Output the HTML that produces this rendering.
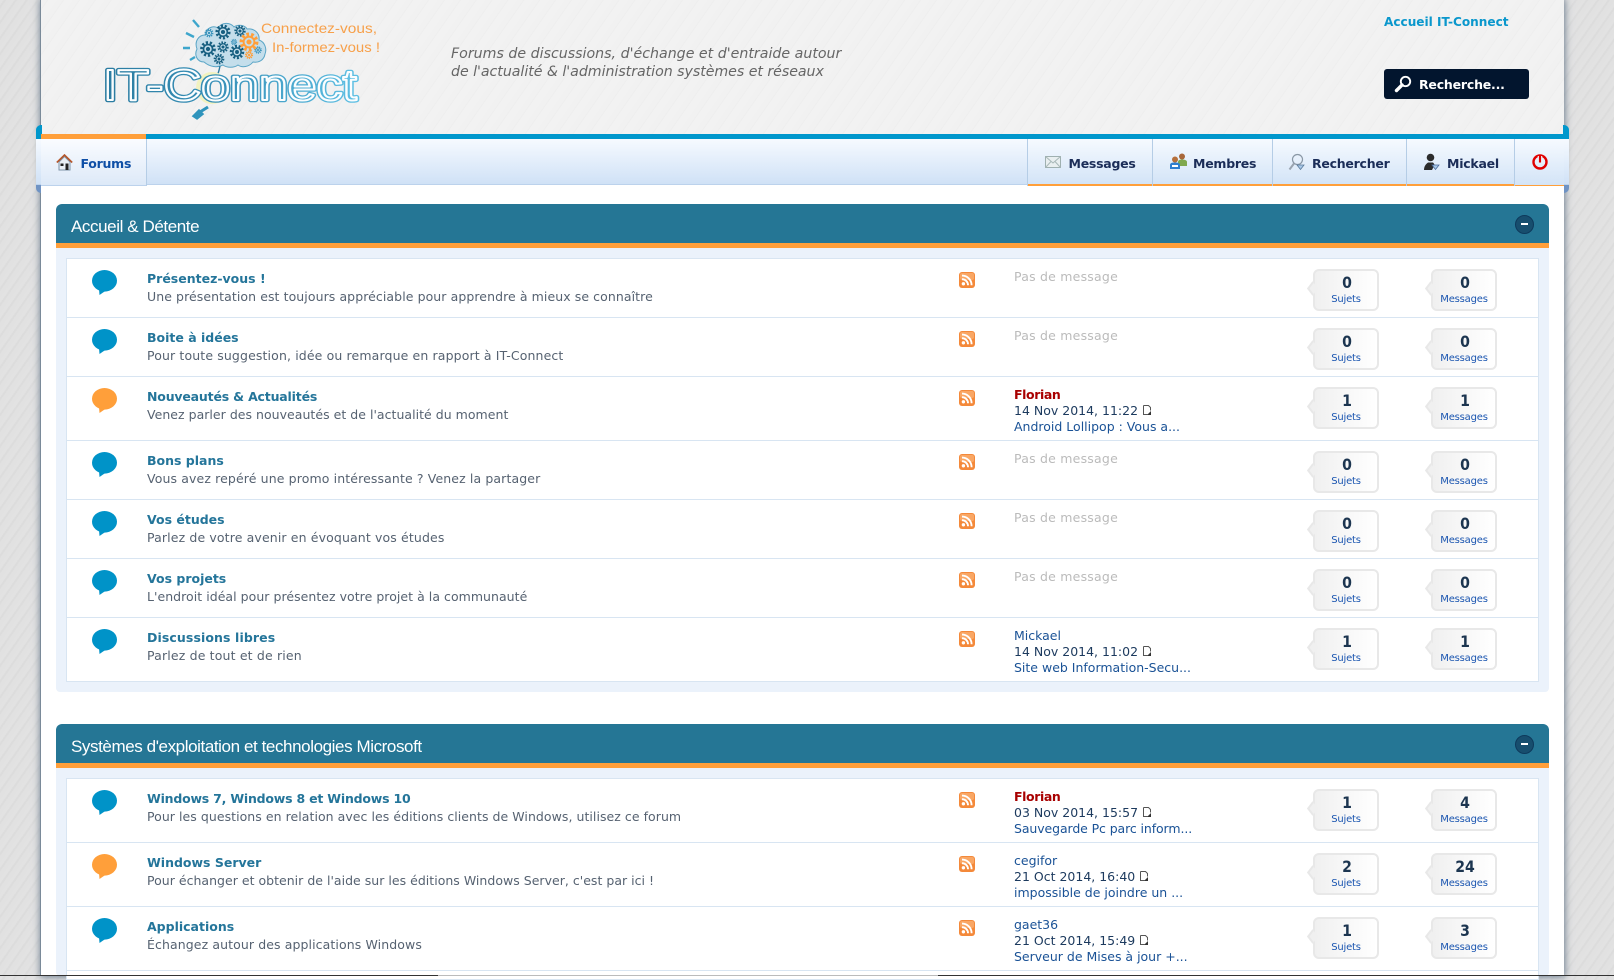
<!DOCTYPE html>
<html lang="fr"><head><meta charset="utf-8"><title>IT-Connect Forums</title>
<style>
html,body{margin:0;padding:0}
body{width:1614px;height:976px;overflow:hidden;position:relative;font-family:"DejaVu Sans","Liberation Sans",sans-serif;font-size:13px;
background:#e0e0e0 repeating-linear-gradient(125deg,#e2e2e2 0,#e2e2e2 3px,#dcdcdc 3px,#dcdcdc 5px,#e1e1e1 5px,#e1e1e1 9px)}
div,span,svg{position:absolute}
#wrap{left:41px;top:0;width:1523px;height:976px;background:#fff;box-shadow:-1px 0 0 #7a8a99,0 0 7px 1px #6d7d8f}
#hd{left:41px;top:0;width:1523px;height:134px;background:#f0f0f0 repeating-linear-gradient(125deg,#f1f1f1 0,#f1f1f1 5px,#eeeeee 5px,#eeeeee 6px,#f2f2f2 6px,#f2f2f2 13px)}
.tag{left:451px;font-style:italic;font-size:14.2px;color:#666;white-space:nowrap;line-height:18px}
#home{left:1384px;top:13px;font-weight:bold;font-size:12.1px;color:#0a97cc;line-height:18px;white-space:nowrap}
#srch{left:1384px;top:69px;width:145px;height:30px;background:#02152e;border-radius:3px}
#srch span{left:35px;top:5.500px;color:#fff;font-weight:bold;font-size:12.5px;letter-spacing:-.2px;line-height:20px;white-space:nowrap}
.bmp{width:6px;height:14px;top:125px;background:#0097cc}
#bar{left:36px;top:134px;width:1533px;height:5px;background:#0097cc}
#nav{left:36px;top:139px;width:1533px;height:46px;background:linear-gradient(#f6faff,#cfe1f6);box-shadow:inset 0 -1px 0 #bcd2ec}
.tab{top:139px;height:45px;background:linear-gradient(#f6faff,#d3e4f7);border-bottom:2px solid #ff9f3a;box-shadow:-1px 0 0 #b5cde6}
.tab span{top:14.500px;font-weight:bold;font-size:12.5px;letter-spacing:-.25px;line-height:20px;color:#1b2d58;white-space:nowrap}
.cat{left:56px;width:1493px;height:39px;background:#257695;border-radius:6px 6px 0 0;border-bottom:5px solid #ff9f3a}
.cat span{left:15px;top:12px;font-family:"Liberation Sans",sans-serif;font-size:17px;line-height:22px;color:#fff;letter-spacing:-.41px;white-space:nowrap}
.tog{left:1459px;top:11px;width:17px;height:17px;border-radius:50%;background:#174e6e;border:1px solid #0e3a5c}
.tog:after{content:"";position:absolute;left:5px;top:7px;width:7px;height:2px;background:#fff}
.bdy{left:56px;width:1493px;background:#ebf2fb;border-radius:0 0 4px 4px}
.pan{left:66px;width:1471px;background:#fff;border:1px solid #d8e5f2}
.r{left:66px;width:1473px;border-bottom:1px solid #d8e5f2;box-sizing:border-box}
.r>svg.b{left:26px;top:12px}
.r>svg.f{left:893px;top:14px}
.t{left:81px;top:11.500px;font-weight:bold;font-size:12.5px;line-height:18px;color:#24759a;white-space:nowrap}
.d{left:81px;top:30px;font-size:12.5px;letter-spacing:.08px;line-height:18px;color:#566271;white-space:nowrap}
.n{left:948px;top:11px;line-height:16px;font-size:12.5px;color:#1c3a5e;white-space:nowrap}
.n b{color:#a80000;letter-spacing:-.4px}
.n a{color:#1a5296;text-decoration:none}
.n i{font-style:normal;color:#bbb;letter-spacing:.22px}
.bx{top:11px;width:62px;height:38px;border:2px solid #e8e8e8;border-radius:6px;background:linear-gradient(90deg,#f0f0f0,#fff);text-align:center;margin-left:-1px}
.bx:before{content:"";position:absolute;left:-7px;top:13px;width:9px;height:9px;background:#f0f0f0;transform:rotate(45deg) skew(8deg,8deg);border-left:2px solid #e8e8e8;border-bottom:2px solid #e8e8e8;box-sizing:border-box}
.bx b{position:absolute;left:1px;width:100%;top:1.500px;font-size:16px;line-height:20px;color:#1c3550;transform:scaleX(.88)}
.bx u{position:absolute;left:-4px;width:100%;top:22px;text-decoration:none;font-size:10px;line-height:14px;color:#1a55b0;letter-spacing:-.2px;padding:0 4px;box-sizing:content-box}
.b1{left:1248px}.b2{left:1366px}
</style></head><body>
<svg width="0" height="0" style="left:0;top:0"><defs>
<symbol id="bu" viewBox="0 0 25 25"><ellipse cx="12.5" cy="10.8" rx="12.5" ry="10.8"/><path d="M7 19 L7.5 25 L14 20.5Z"/></symbol>
<symbol id="rs" viewBox="0 0 16 16"><rect width="16" height="16" rx="3" fill="#f4893a"/><rect x="1" y="1" width="14" height="7" rx="2" fill="#f9a765"/><circle cx="4.4" cy="11.8" r="1.7" fill="#fff"/><path d="M3 7.2a6 6 0 0 1 6 6M3 3.6a9.6 9.6 0 0 1 9.6 9.6" fill="none" stroke="#fff" stroke-width="1.9"/></symbol>
<symbol id="nw" viewBox="0 0 10 11"><path d="M1.5.5h5l2 2v3M1.5.5v9h4" fill="none" stroke="#555" stroke-width="1"/><path d="M9 6v4H5z" fill="#333"/></symbol>
<linearGradient id="lg" x1="0" x2="1" y1="0" y2="0"><stop offset="0" stop-color="#2a7ba0"/><stop offset=".5" stop-color="#3a93bb"/><stop offset="1" stop-color="#5fc0e4"/></linearGradient>
<g id="gr"><circle r="5" fill="none" stroke-width="2.6" stroke-dasharray="1.7 1.4"/><circle r="3.6" fill="none" stroke-width="1.3"/><circle r="1.2"/></g>
</defs></svg>

<div id="wrap"></div>
<div id="hd"></div>

<svg style="left:90px;top:10px" width="300" height="115" viewBox="90 10 300 115">
<g fill="#c4deeb" stroke="#5aa5c6" stroke-width="1">
<path d="M204 62c-7 0-10-7-7-13-3-8 2-14 8-14 1-7 8-10 13-7 4-6 12-6 16-1 4-3 11-2 13 2 7-1 13 4 12 11 6 2 8 9 6 14-1 6-6 9-12 8-4 5-11 6-15 3-4 3-11 3-15 0-6 3-13 2-19-3z"/>
</g>
<g fill="#175f80" stroke="#175f80">
<use href="#gr" transform="translate(223 32) scale(1.2)"/><use href="#gr" transform="translate(208 49) scale(1.25)"/><use href="#gr" transform="translate(223 47) scale(.9)"/><use href="#gr" transform="translate(237 52) scale(1.15)"/><use href="#gr" transform="translate(240 31) scale(.9)"/><use href="#gr" transform="translate(219 59) scale(.85)"/>
</g>
<g fill="#3a93bb" stroke="#3a93bb"><use href="#gr" transform="translate(209 33) scale(.7)"/><use href="#gr" transform="translate(234 42) scale(.5)"/><use href="#gr" transform="translate(258 50) scale(.6)"/></g>
<g fill="#ff9f3a" stroke="#ff9f3a"><use href="#gr" transform="translate(249 42) scale(1.5)"/><use href="#gr" transform="translate(249 55) scale(.65)"/></g>
<path d="M193 20l6 7M186 33l8 4M183 48h7M190 60l5-3" stroke="#3ea6cc" stroke-width="2.4" fill="none"/>
<path d="M220 66c-1 5-2 8-3 10" stroke="#2a7ba0" stroke-width="1.4" fill="none"/>
<circle cx="212" cy="88" r="14" fill="none" stroke="#f2f2c0" stroke-width="4"/>
<text x="261" y="33" font-family="Liberation Sans,sans-serif" font-size="14" fill="#f7a04a" textLength="116" lengthAdjust="spacingAndGlyphs">Connectez-vous,</text>
<text x="272" y="52" font-family="Liberation Sans,sans-serif" font-size="14" fill="#f7a04a" textLength="108" lengthAdjust="spacingAndGlyphs">In-formez-vous !</text>
<text x="103" y="100" font-family="Liberation Sans,sans-serif" font-size="44" fill="none" stroke="url(#lg)" stroke-width="4.6" stroke-linejoin="round" textLength="254" lengthAdjust="spacingAndGlyphs">IT-Connect</text>
<text x="103" y="100" font-family="Liberation Sans,sans-serif" font-size="44" fill="none" stroke="#fbfdfe" stroke-width="2" stroke-linejoin="round" textLength="254" lengthAdjust="spacingAndGlyphs">IT-Connect</text>
<path d="M194 116l5-5 3 3-5 4zM200 112l8-5" stroke="#2f94bc" stroke-width="3" fill="#2f94bc"/>
</svg>

<div class="tag" style="top:45px">Forums de discussions, d'échange et d'entraide autour</div>
<div class="tag" style="top:63px;letter-spacing:-.04px">de l'actualité &amp; l'administration systèmes et réseaux</div>
<div id="home">Accueil IT-Connect</div>
<div id="srch"><svg style="left:10px;top:6px" width="18" height="18" viewBox="0 0 18 18"><circle cx="11.5" cy="6.5" r="4.7" fill="none" stroke="#fff" stroke-width="1.9"/><path d="M8 10L2.5 15.5" stroke="#fff" stroke-width="3.4" stroke-linecap="round"/></svg><span>Recherche...</span></div>

<div class="bmp" style="left:36px;border-radius:5px 0 0 5px"></div>
<div class="bmp" style="left:1563px;border-radius:0 5px 5px 0"></div>
<div style="left:36px;top:184px;width:5px;height:9px;background:#6f93c4;border-radius:0 0 0 5px"></div>
<div style="left:1564px;top:184px;width:5px;height:9px;background:#6f93c4;border-radius:0 0 5px 0"></div>
<div id="nav"></div>
<div id="bar"></div>

<div style="left:41px;top:134px;width:105px;height:5px;background:#ff9f3a"></div>
<div style="left:41px;top:139px;width:105px;height:46px;background:linear-gradient(#fafcff,#dde9f8);border-right:1px solid #b5cde6;border-bottom:1px solid #bcd2ec">
<svg style="left:15px;top:15px" width="17" height="17" viewBox="0 0 17 17"><path d="M3 8v8h11V8L8.5 2.5z" fill="#e8eef4" stroke="#7d93a8"/><path d="M.8 8.5L8.5 1l7.7 7.5" fill="none" stroke="#b5562a" stroke-width="1.6"/><rect x="9.5" y="9.5" width="3" height="6.5" fill="#222"/><rect x="4.5" y="9.5" width="3" height="2.5" fill="#222"/></svg>
<span style="left:39.5px;top:14.500px;font-weight:bold;font-size:12.5px;letter-spacing:-.25px;line-height:20px;color:#0e4fa6">Forums</span></div>

<div class="tab" style="left:1028px;width:124px"><svg style="left:17px;top:17px" width="16" height="12" viewBox="0 0 16 12"><rect x=".5" y=".5" width="15" height="11" fill="#e9eff0" stroke="#9fb0b0"/><path d="M.5.5L8 7l7.5-6.5M.5 11.5L6 5.500M15.500 11.500L10 5.500" fill="none" stroke="#a8b8b8"/></svg><span style="left:40.5px">Messages</span></div>
<div class="tab" style="left:1153px;width:119px"><svg style="left:17px;top:14px" width="17" height="17" viewBox="0 0 17 17"><circle cx="12" cy="3.500" r="3" fill="#a8673a"/><path d="M8 13V9c0-2 2-2.500 4-2.500s5 .5 5 2.500v4z" fill="#7fa84e"/><circle cx="5" cy="6.500" r="3" fill="#b5703c"/><path d="M0 16v-4c0-2 2-2.500 5-2.500s5 .5 5 2.500v4z" fill="#2f7fd0"/><rect x="2" y="12" width="6" height="2" fill="#fff"/></svg><span style="left:40px">Membres</span></div>
<div class="tab" style="left:1273px;width:133px"><svg style="left:15px;top:14px" width="17" height="18" viewBox="0 0 17 18"><circle cx="9.500" cy="6.500" r="5" fill="none" stroke="#8a98a6" stroke-width="1.200"/><path d="M6 10.500L1.500 16.500" stroke="#9aa4b0" stroke-width="2"/><path d="M9 12h7l-3.500 4.500z" fill="#a8c8e8" stroke="#5a7a9a" stroke-width=".8"/></svg><span style="left:39px">Rechercher</span></div>
<div class="tab" style="left:1407px;width:107px"><svg style="left:16px;top:14px" width="17" height="18" viewBox="0 0 17 18"><circle cx="7.500" cy="4.500" r="3.800" fill="#2c2c2c"/><path d="M1 17c0-4 2-6 4-7.500h5c1 1 1.500 2 1.500 2.500L9 17z" fill="#2c2c2c"/><path d="M9 12h7l-3.500 4.500z" fill="#a8c8e8" stroke="#4a6a9a" stroke-width=".8"/></svg><span style="left:40px">Mickael</span></div>
<div class="tab" style="left:1515px;width:49px;border-bottom-width:1px;height:46px"><svg style="left:17px;top:15px" width="16" height="16" viewBox="0 0 16 16"><circle cx="8" cy="8" r="6.500" fill="none" stroke="#e00000" stroke-width="2.400"/><path d="M8 2v6.500" stroke="#f0f6fd" stroke-width="4.500"/><path d="M8 2v6.500" stroke="#e00000" stroke-width="2.200"/></svg></div>

<div class="cat" style="top:204px"><span>Accueil &amp; Détente</span><div class="tog"></div></div>
<div class="bdy" style="top:248px;height:444px"></div>
<div class="pan" style="top:258px;height:422px"></div>

<div class="cat" style="top:724px"><span>Systèmes d'exploitation et technologies Microsoft</span><div class="tog"></div></div>
<div class="bdy" style="top:768px;height:208px"></div>
<div class="pan" style="top:778px;height:200px"></div>

<div class="r" style="top:258px;height:60px"><svg class="b" width="25" height="25" fill="#0093c8"><use href="#bu"/></svg><div class="t">Présentez-vous !</div><div class="d">Une présentation est toujours appréciable pour apprendre à mieux se connaître</div><svg class="f" width="16" height="16"><use href="#rs"/></svg><div class="n"><i>Pas de message</i></div><div class="bx b1"><b>0</b><u>Sujets</u></div><div class="bx b2"><b>0</b><u>Messages</u></div></div>

<div class="r" style="top:317px;height:60px"><svg class="b" width="25" height="25" fill="#0093c8"><use href="#bu"/></svg><div class="t">Boite à idées</div><div class="d" style="letter-spacing:.13px">Pour toute suggestion, idée ou remarque en rapport à IT-Connect</div><svg class="f" width="16" height="16"><use href="#rs"/></svg><div class="n"><i>Pas de message</i></div><div class="bx b1"><b>0</b><u>Sujets</u></div><div class="bx b2"><b>0</b><u>Messages</u></div></div>

<div class="r" style="top:376px;height:65px"><svg class="b" width="25" height="25" fill="#ff9f3a"><use href="#bu"/></svg><div class="t" style="letter-spacing:-.18px">Nouveautés &amp; Actualités</div><div class="d" style="letter-spacing:.03px">Venez parler des nouveautés et de l'actualité du moment</div><svg class="f" width="16" height="16"><use href="#rs"/></svg><div class="n"><b>Florian</b><br>14 Nov 2014, 11:22 <svg style="position:static;vertical-align:-1px" width="10" height="11"><use href="#nw"/></svg><br><a>Android Lollipop : Vous a...</a></div><div class="bx b1"><b>1</b><u>Sujets</u></div><div class="bx b2"><b>1</b><u>Messages</u></div></div>

<div class="r" style="top:440px;height:60px"><svg class="b" width="25" height="25" fill="#0093c8"><use href="#bu"/></svg><div class="t">Bons plans</div><div class="d" style="letter-spacing:.12px">Vous avez repéré une promo intéressante ? Venez la partager</div><svg class="f" width="16" height="16"><use href="#rs"/></svg><div class="n"><i>Pas de message</i></div><div class="bx b1"><b>0</b><u>Sujets</u></div><div class="bx b2"><b>0</b><u>Messages</u></div></div>

<div class="r" style="top:499px;height:60px"><svg class="b" width="25" height="25" fill="#0093c8"><use href="#bu"/></svg><div class="t">Vos études</div><div class="d" style="letter-spacing:.13px">Parlez de votre avenir en évoquant vos études</div><svg class="f" width="16" height="16"><use href="#rs"/></svg><div class="n"><i>Pas de message</i></div><div class="bx b1"><b>0</b><u>Sujets</u></div><div class="bx b2"><b>0</b><u>Messages</u></div></div>

<div class="r" style="top:558px;height:60px"><svg class="b" width="25" height="25" fill="#0093c8"><use href="#bu"/></svg><div class="t">Vos projets</div><div class="d" style="letter-spacing:.04px">L'endroit idéal pour présentez votre projet à la communauté</div><svg class="f" width="16" height="16"><use href="#rs"/></svg><div class="n"><i>Pas de message</i></div><div class="bx b1"><b>0</b><u>Sujets</u></div><div class="bx b2"><b>0</b><u>Messages</u></div></div>

<div class="r" style="top:617px;height:64px;border-bottom:0"><svg class="b" width="25" height="25" fill="#0093c8"><use href="#bu"/></svg><div class="t" style="letter-spacing:.1px">Discussions libres</div><div class="d" style="letter-spacing:.16px">Parlez de tout et de rien</div><svg class="f" width="16" height="16"><use href="#rs"/></svg><div class="n"><a>Mickael</a><br>14 Nov 2014, 11:02 <svg style="position:static;vertical-align:-1px" width="10" height="11"><use href="#nw"/></svg><br><a>Site web Information-Secu...</a></div><div class="bx b1"><b>1</b><u>Sujets</u></div><div class="bx b2"><b>1</b><u>Messages</u></div></div>

<div class="r" style="top:778px;height:65px"><svg class="b" width="25" height="25" fill="#0093c8"><use href="#bu"/></svg><div class="t" style="letter-spacing:-.21px">Windows 7, Windows 8 et Windows 10</div><div class="d" style="letter-spacing:.05px">Pour les questions en relation avec les éditions clients de Windows, utilisez ce forum</div><svg class="f" width="16" height="16"><use href="#rs"/></svg><div class="n"><b>Florian</b><br>03 Nov 2014, 15:57 <svg style="position:static;vertical-align:-1px" width="10" height="11"><use href="#nw"/></svg><br><a style="letter-spacing:-.1px">Sauvegarde Pc parc inform...</a></div><div class="bx b1"><b>1</b><u>Sujets</u></div><div class="bx b2"><b>4</b><u>Messages</u></div></div>

<div class="r" style="top:842px;height:65px"><svg class="b" width="25" height="25" fill="#ff9f3a"><use href="#bu"/></svg><div class="t">Windows Server</div><div class="d" style="letter-spacing:.02px">Pour échanger et obtenir de l'aide sur les éditions Windows Server, c'est par ici !</div><svg class="f" width="16" height="16"><use href="#rs"/></svg><div class="n"><a>cegifor</a><br>21 Oct 2014, 16:40 <svg style="position:static;vertical-align:-1px" width="10" height="11"><use href="#nw"/></svg><br><a>impossible de joindre un ...</a></div><div class="bx b1"><b>2</b><u>Sujets</u></div><div class="bx b2"><b>24</b><u>Messages</u></div></div>

<div class="r" style="top:906px;height:65px"><svg class="b" width="25" height="25" fill="#0093c8"><use href="#bu"/></svg><div class="t">Applications</div><div class="d" style="letter-spacing:.1px">Échangez autour des applications Windows</div><svg class="f" width="16" height="16"><use href="#rs"/></svg><div class="n"><a>gaet36</a><br>21 Oct 2014, 15:49 <svg style="position:static;vertical-align:-1px" width="10" height="11"><use href="#nw"/></svg><br><a>Serveur de Mises à jour +...</a></div><div class="bx b1"><b>1</b><u>Sujets</u></div><div class="bx b2"><b>3</b><u>Messages</u></div></div>

<div style="left:0;top:975px;width:1614px;height:1px;background:#333"></div>
<div style="left:438px;top:975px;width:500px;height:1px;background:#bbb"></div>
</body></html>
